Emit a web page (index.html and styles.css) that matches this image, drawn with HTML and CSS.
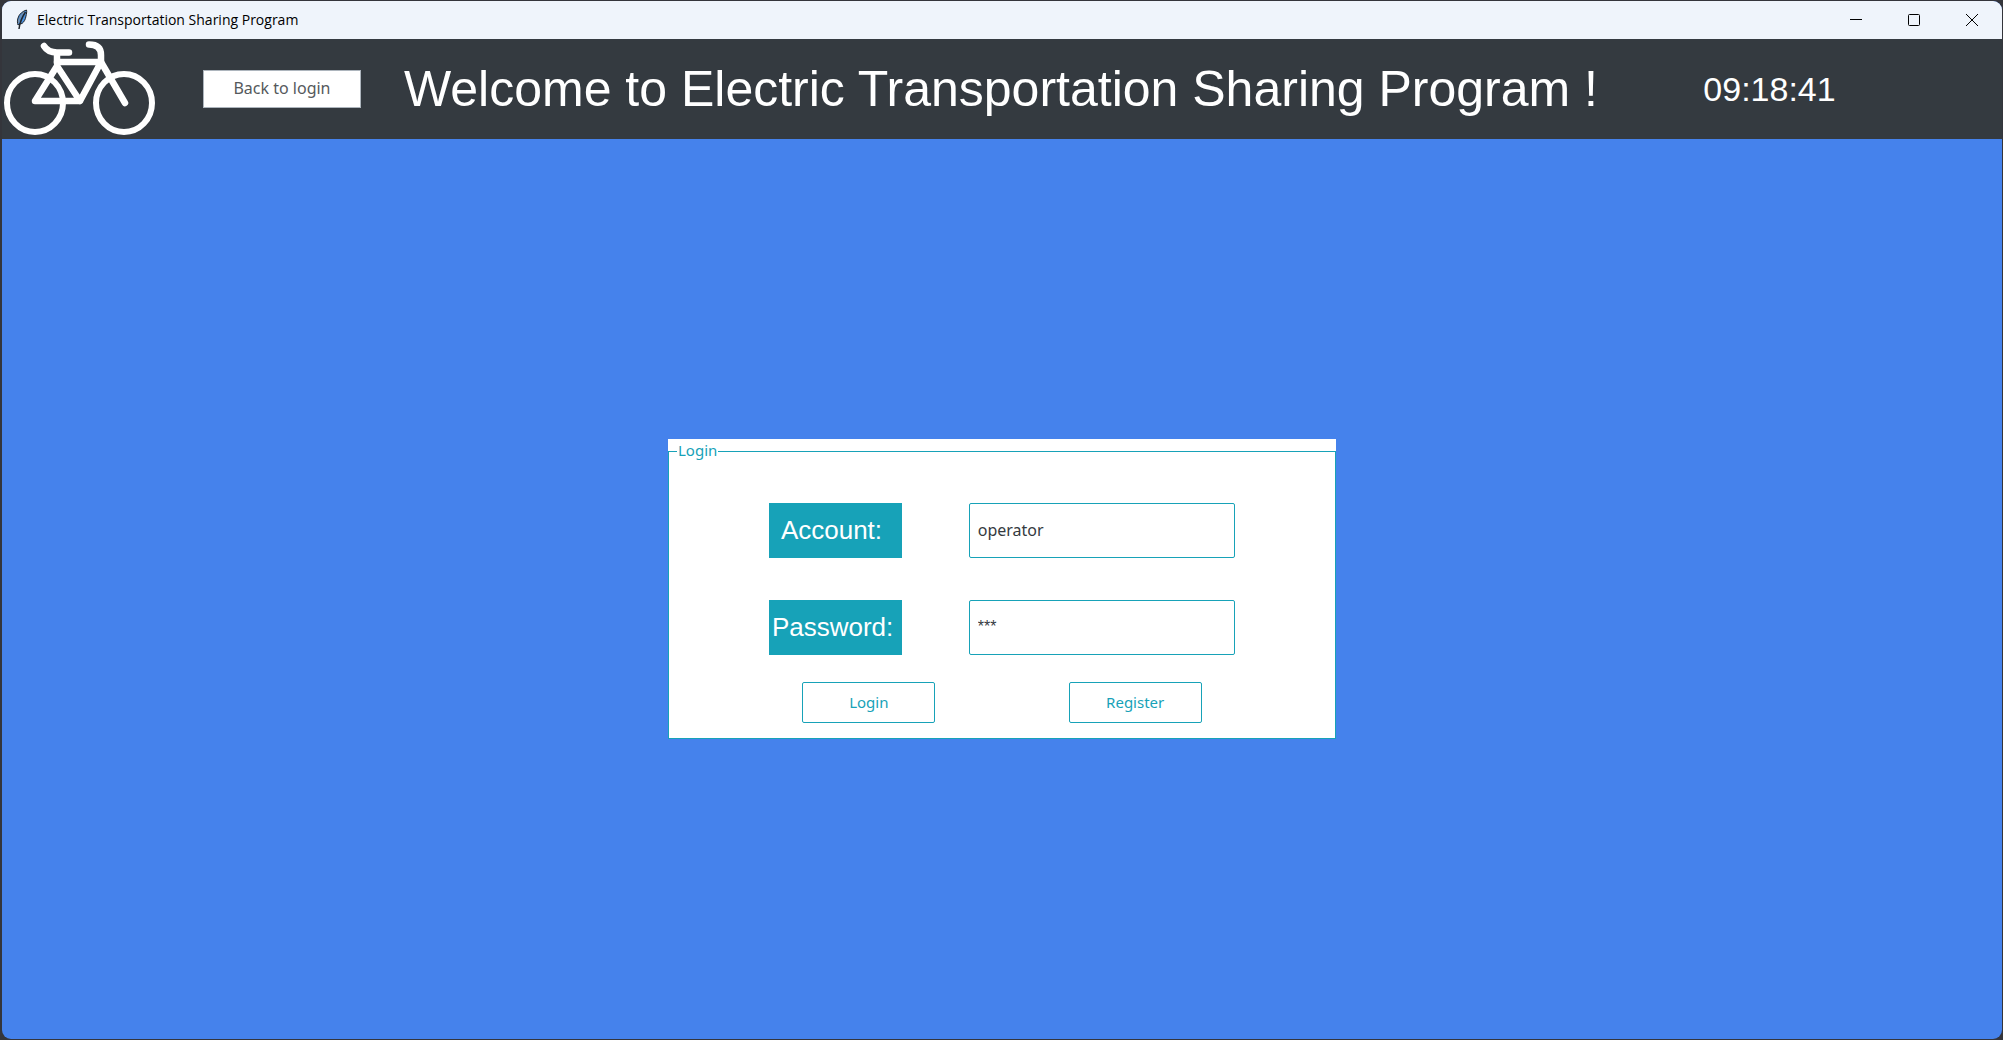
FILE: index.html
```html
<!DOCTYPE html>
<html lang="en">
<head>
<meta charset="utf-8">
<title>Electric Transportation Sharing Program</title>
<link rel="stylesheet" href="styles.css">
</head>
<body>
<div class="window">
  <div class="titlebar">
    <svg class="feather" width="12" height="22" viewBox="0 0 12 22" aria-hidden="true">
      <path d="M10.500 1C7 2 3 5 2 9c-1 3-.5 5 0 7l1.500-1 2.500-.5c2-1.500 3.500-4 4-7.500.4-2 1-4 .5-6z" fill="#4a8fdb" stroke="#20252b"/>
      <path d="M9.500 3C6 8 4 12 3 20" fill="none" stroke="#20252b" stroke-width="1.500"/>
      <path d="M8 3C5 6 3 10 2.500 14" fill="none" stroke="#8a9096"/>
    </svg>
    <span class="caption">Electric Transportation Sharing Program</span>
    <div class="controls">
      <button class="control" type="button" aria-label="Minimize"><svg width="14" height="14" viewBox="0 0 14 14"><path d="M1 6.500h12"/></svg></button>
      <button class="control" type="button" aria-label="Maximize"><svg width="14" height="14" viewBox="0 0 14 14"><rect x="1.500" y="1.500" width="11" height="11" rx="1"/></svg></button>
      <button class="control" type="button" aria-label="Close"><svg width="14" height="14" viewBox="0 0 14 14"><path d="M1 1l12 12M13 1L1 13"/></svg></button>
    </div>
  </div>
  <header class="header">
    <svg class="bike" width="155" height="100" viewBox="0 0 155 100" aria-hidden="true">
      <g fill="none" stroke="#fff" stroke-linecap="round" stroke-linejoin="round">
        <ellipse cx="33" cy="64" rx="28" ry="29" stroke-width="6"/>
        <ellipse cx="122" cy="64" rx="28" ry="29" stroke-width="6"/>
        <path d="M55 23H99L78 62H33L55 27L78 62M99 23L123 64" stroke-width="6.500"/>
        <path d="M55 24V14M42 7C45 12 49 13.500 55 13.500H67" stroke-width="6.500"/>
        <path d="M99 24V16C99 9 95 5.500 87 5.500" stroke-width="6.500"/>
      </g>
    </svg>
    <button class="back" type="button">Back to login</button>
    <h1 class="welcome">Welcome to Electric Transportation Sharing Program !</h1>
    <time class="clock">09:18:41</time>
  </header>
  <main class="main">
    <form class="card">
      <fieldset class="group">
        <legend class="legend">Login</legend>
        <div class="row">
          <label class="label label-account" for="account">Account:</label>
          <input class="field" id="account" type="text" value="operator">
        </div>
        <div class="row">
          <label class="label" for="password">Password:</label>
          <input class="field field-masked" id="password" type="text" value="***" autocomplete="off">
        </div>
        <div class="actions">
          <button class="action" type="button">Login</button>
          <button class="action" type="button">Register</button>
        </div>
      </fieldset>
    </form>
  </main>
</div>
</body>
</html>
```
FILE: styles.css
```css
* { box-sizing: border-box; }

body {
  margin: 0;
  min-height: 100vh;
  padding: 1px 1px 1px 2px;
  display: flex;
  background: #34353b;
  font-family: "Noto Sans", "Open Sans", sans-serif;
  font-size: 15px;
}

button, input { font: inherit; margin: 0; }

.window {
  flex: 1;
  display: flex;
  flex-direction: column;
  border-radius: 9px;
  overflow: hidden;
  background: #4582ec;
}

.titlebar {
  height: 38px;
  display: flex;
  align-items: center;
  padding: 0 1px 0 14px;
  background: #eff4fb;
}

.caption {
  flex: 1;
  margin-left: 9px;
  padding-bottom: 2px;
  font-family: "Open Sans", "Noto Sans", sans-serif;
  font-size: 14px;
  color: #000;
}

.controls { display: flex; }

.control {
  width: 58px;
  height: 38px;
  padding: 0;
  border: 0;
  background: none;
  display: grid;
  place-items: center;
}

.control svg { fill: none; stroke: #000; stroke-width: 1; }

.header {
  height: 100px;
  display: grid;
  grid-template-columns: 201fr 158fr 1280fr 257fr 104fr;
  align-items: center;
  background: #343a40;
  color: #fff;
  font-family: "Liberation Sans", Arial, sans-serif;
}

.bike { display: block; }

.back {
  height: 38px;
  padding: 0 0 2px;
  border: 1px solid #adb5bd;
  background: #fff;
  color: #55595c;
  font-family: "Noto Sans", "Open Sans", sans-serif;
  font-size: 16px;
}

.welcome {
  margin: 0;
  font-size: 50px;
  font-weight: 400;
  text-align: center;
  white-space: nowrap;
}

.clock { font-size: 34px; text-align: center; }

.main {
  flex: 1;
  display: grid;
  place-items: center;
}

.card {
  width: 33.4%;
  background: #fff;
}

.group {
  min-width: 0;
  margin: 0;
  padding: 40px 0 15px;
  border: 1px solid #17a2b8;
}

.legend {
  margin-left: 8px;
  padding: 0 1px 2px;
  line-height: 22px;
  color: #17a2b8;
}

.row {
  display: grid;
  grid-template-columns: 20fr 40fr;
  column-gap: 14.3%;
  margin: 0 15% 42px;
}

.label {
  height: 55px;
  padding-left: 3px;
  background: #17a2b8;
  color: #fff;
  font-family: "Liberation Sans", Arial, sans-serif;
  font-size: 26px;
  line-height: 54px;
}

.label-account { padding-left: 12px; }

.field {
  width: 100%;
  height: 55px;
  padding: 0 8px 2px;
  border: 1px solid #17a2b8;
  border-radius: 2px;
  background: #fff;
  color: #343a40;
  font-size: 16px;
}

.field-masked { font-family: "Liberation Sans", Arial, sans-serif; }

.actions {
  display: grid;
  grid-template-columns: 1fr 1fr;
  column-gap: 33.3%;
  margin: -15px 20% 0;
}

.action {
  height: 41px;
  padding: 0 0 2px;
  border: 1px solid #17a2b8;
  border-radius: 2px;
  background: #fff;
  color: #17a2b8;
}
```
